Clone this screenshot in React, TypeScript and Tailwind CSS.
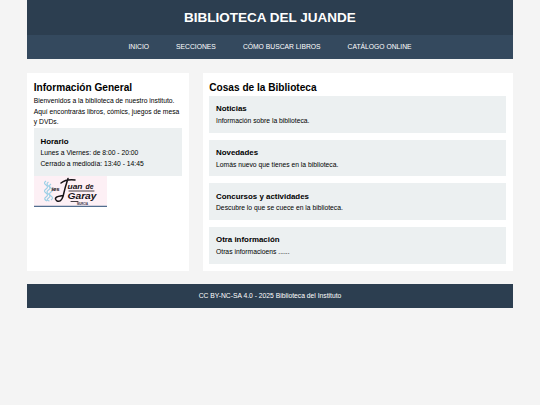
const links = ["INICIO", "SECCIONES", "CÓMO BUSCAR LIBROS", "CATÁLOGO ONLINE"];

const sections = [
	{ title: "Noticias", text: "Información sobre la biblioteca." },
	{ title: "Novedades", text: "Lomás nuevo que tienes en la biblioteca." },
	{
		title: "Concursos y actividades",
		text: "Descubre lo que se cuece en la biblioteca.",
	},
	{ title: "Otra información", text: "Otras informacioens ......" },
];

function Logo() {
	return (
		<svg
			className="block h-[31px] w-[73.5px] bg-[#fdf0f5]"
			viewBox="0 0 73.5 31"
			fill="none"
		>
			{/* waves */}
			<g stroke="#9ccfe6" strokeWidth="1.2">
				<path d="M12 5q-3 2 0 4t0 4t0 4t0 4t1 4" />
				<path d="M14.5 6q-3 2 0 4t0 4t0 4t0 4t1 3" />
				<path d="M17 8q-3 2 0 4t0 4t0 4t0 4" />
			</g>
			<g
				fill="#161216"
				className="font-['Liberation_Sans',sans-serif] font-bold italic"
			>
				<text x="17.5" y="15" fontSize="6" textLength="8">
					ies
				</text>
				<text x="33.5" y="12.5" fontSize="8" textLength="15" lengthAdjust="spacingAndGlyphs">
					uan
				</text>
				<text x="51.5" y="12.5" fontSize="8" textLength="8" lengthAdjust="spacingAndGlyphs">
					de
				</text>
				<text x="33.5" y="23" fontSize="9" textLength="29" lengthAdjust="spacingAndGlyphs">
					Garay
				</text>
			</g>
			{/* pen flourishes */}
			<g stroke="#161216" strokeLinecap="round">
				<path
					d="M27 7q5-4 14-3M34 2.5q-3 9-5 18q-2 6-6 4.500q-5-4 6-5.500"
					strokeWidth="1.5"
				/>
				<path d="M35 15h25M37 25.500h7" strokeWidth="0.8" />
			</g>
			<text
				x="43"
				y="29"
				fontSize="2.8"
				textLength="11"
				fill="#343047"
				className="font-['Liberation_Sans',sans-serif] font-bold"
			>
				MURCIA
			</text>
			<path d="M0 30.3h73.5" stroke="#526d8f" strokeWidth="1.2" />
		</svg>
	);
}

export default function App() {
	return (
		<div className="min-h-screen bg-[#f4f4f4] font-['Liberation_Sans',Arial,sans-serif] text-[6.75px] leading-[1.6] text-black">
			<div className="mx-auto w-[90%]">
				<header className="bg-[#2c3e50] p-[6.75px] text-center text-white">
					<h1 className="text-[13.5px] font-bold">BIBLIOTECA DEL JUANDE</h1>
				</header>
				<nav className="mb-[13.5px] bg-[#34495e] px-[6.75px] pt-[7.25px] pb-[6.25px]">
					<ul className="flex justify-center gap-[27px] text-white">
						{links.map((link) => (
							<li key={link}>
								<a href="#">{link}</a>
							</li>
						))}
					</ul>
				</nav>

				<div className="flex gap-[13.5px]">
					<aside className="w-[162px] bg-white p-[6.75px]">
						<h2 className="text-[10.125px] font-bold">Información General</h2>
						<p>
							Bienvenidos a la biblioteca de nuestro instituto. Aquí encontrarás
							libros, cómics, juegos de mesa y DVDs.
						</p>
						<div className="bg-[#ecf0f1] px-[6.75px] pt-[7.5px] pb-[6px]">
							<h3 className="text-[7.9px] font-bold">Horario</h3>
							<p>Lunes a Viernes: de 8:00 - 20:00</p>
							<p>Cerrado a mediodía: 13:40 - 14:45</p>
						</div>
						<Logo />
					</aside>

					<main className="flex-1 bg-white p-[6.75px]">
						<h2 className="text-[10.125px] font-bold">Cosas de la Biblioteca</h2>
						<div className="flex flex-col gap-[6.75px]">
							{sections.map(({ title, text }) => (
								<section
									key={title}
									className="bg-[#ecf0f1] px-[6.75px] pt-[7.5px] pb-[6px]"
								>
									<h3 className="text-[7.9px] font-bold">{title}</h3>
									<p>{text}</p>
								</section>
							))}
						</div>
					</main>
				</div>

				<footer className="mt-[13.5px] bg-[#2c3e50] p-[6.75px] text-center text-white">
					<p>CC BY-NC-SA 4.0 - 2025 Biblioteca del Instituto</p>
				</footer>
			</div>
		</div>
	);
}
